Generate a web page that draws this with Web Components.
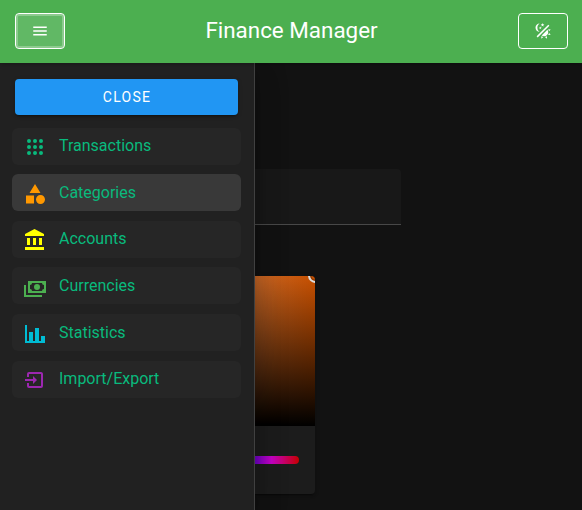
<!DOCTYPE html>
<html lang="en">
<head>
<meta charset="utf-8">
<title>Finance Manager</title>
<style>
html,body{margin:0;height:100%;overflow:hidden;background:#121212;font-family:Roboto,"Liberation Sans",sans-serif;color:#fff}
</style>
</head>
<body>
<finance-app></finance-app>
<script>
const ICONS={
menu:'M3,6H21V8H3V6M3,11H21V13H3V11M3,16H21V18H3V16Z',
theme:'M7.5,2C5.71,3.15 4.5,5.18 4.5,7.5C4.5,9.82 5.71,11.85 7.53,13C4.46,13 2,10.54 2,7.5A5.5,5.5 0 0,1 7.5,2M19.07,3.5L20.5,4.93L4.93,20.5L3.5,19.07L19.07,3.5M12.89,5.93L11.41,5L9.97,6L10.39,4.3L9,3.24L10.75,3.12L11.33,1.47L12,3.1L13.73,3.13L12.38,4.26L12.89,5.93M9.59,9.54L8.43,8.81L7.31,9.59L7.65,8.27L6.56,7.44L7.92,7.35L8.37,6.06L8.88,7.33L10.24,7.36L9.19,8.23L9.59,9.54M19,13.5A5.5,5.5 0 0,1 13.5,19C12.28,19 11.15,18.6 10.24,17.93L17.93,10.24C18.6,11.15 19,12.28 19,13.5M14.6,20.08L17.37,18.93L17.13,22.28L14.6,20.08M18.93,17.38L20.08,14.61L22.28,17.15L18.93,17.38M20.08,12.42L18.94,9.64L22.28,9.88L20.08,12.42M9.63,18.93L12.4,20.08L9.87,22.27L9.63,18.93Z',
grid:[6,12,18].flatMap(y=>[6,12,18].map(x=>`M${x-2},${y}a2,2 0 1,0 4,0a2,2 0 1,0 -4,0`)).join(''),
shape:'M11,13.5V21.5H3V13.5H11M12,2L17.5,11H6.5L12,2M17.5,13C20,13 22,15 22,17.5C22,20 20,22 17.5,22C15,22 13,20 13,17.5C13,15 15,13 17.5,13Z',
bank:'M11.5,1L2,6V8H21V6M16,10V17H19V10M2,22H21V19H2M10,10V17H13V10M4,10V17H7V10H4Z',
cash:'M5,6H23V18H5V6M14,9A3,3 0 0,1 17,12A3,3 0 0,1 14,15A3,3 0 0,1 11,12A3,3 0 0,1 14,9M9,8A2,2 0 0,1 7,10V14A2,2 0 0,1 9,16H19A2,2 0 0,1 21,14V10A2,2 0 0,1 19,8H9M1,10H3V20H19V22H1V10Z',
chart:'M22,21H2V3H4V19H6V10H10V19H12V6H16V19H18V14H22V21Z',
import:'M14,12L10,8V11H2V13H10V16M20,18V6C20,4.89 19.1,4 18,4H6A2,2 0 0,0 4,6V9H6V6H18V18H6V15H4V18A2,2 0 0,0 6,20H18A2,2 0 0,0 20,18Z'
};
function define(name,html){
  customElements.define(name,class extends HTMLElement{
    constructor(){
      super();
      this.attachShadow({mode:'open'}).innerHTML=typeof html==='function'?html(this):html;
    }
  });
}
define('mdi-icon',el=>`<style>:host{display:block;width:var(--size,24px);height:var(--size,24px);flex:none}svg{display:block;width:100%;height:100%}</style>
<svg viewBox="0 0 24 24" fill="currentColor"><path d="${ICONS[el.getAttribute('name')]}"/></svg>`);

define('bar-button',`<style>
:host{box-sizing:border-box;display:flex;align-items:center;justify-content:center;width:50px;height:36px;border:1px solid #fff;border-radius:4px;--size:18px}
:host([focused]){background:rgba(255,255,255,.12);box-shadow:inset 0 0 0 2px rgba(255,255,255,.28)}
</style><slot></slot>`);

define('app-bar',`<style>
:host{display:flex;align-items:center;justify-content:space-between;box-sizing:border-box;height:63px;padding:0 14px 1px 15px;background:#4caf50;position:relative;z-index:3;box-shadow:0 1px 5px rgba(0,0,0,.3)}
h1{margin:0;padding-bottom:2px;font-size:22.4px;line-height:32px;font-weight:400;letter-spacing:0}
</style><bar-button focused><mdi-icon name="menu"></mdi-icon></bar-button><h1><slot></slot></h1><bar-button><mdi-icon name="theme"></mdi-icon></bar-button>`);

define('nav-item',`<style>
:host{display:flex;box-sizing:border-box;height:37px;padding:.62px 11px 0;border-radius:6px;background:#262626;color:#09ba7d}
:host([active]){background:#393939}
.icon{display:block;padding-top:7px;color:var(--tint)}
.label{margin-left:12px;font-size:16px;line-height:35px}
</style><span class="icon"><slot name="icon"></slot></span><span class="label"><slot></slot></span>`);

define('close-button',`<style>
:host{display:block;margin:0 3px 12.6px;height:36px;border-radius:4px;background:#2196f3;box-shadow:0 3px 1px -2px rgba(0,0,0,.2),0 2px 2px rgba(0,0,0,.14),0 1px 5px rgba(0,0,0,.12);font-size:14px;line-height:36px;letter-spacing:1.25px;text-indent:1px;text-align:center}
</style><slot></slot>`);

define('nav-drawer',`<style>
:host{position:absolute;z-index:2;left:0;top:0;bottom:0;box-sizing:border-box;width:255px;padding:16px 13px 0 12px;background:#212121;border-right:1px solid #404040;box-shadow:0 8px 10px -5px rgba(0,0,0,.2),0 16px 24px 2px rgba(0,0,0,.14),0 6px 30px 5px rgba(0,0,0,.12)}
nav{display:grid;gap:9.6px}
</style><slot name="action"></slot><nav><slot></slot></nav>`);

define('text-input',`<style>
:host{display:block;box-sizing:border-box;width:385px;height:56px;background:#181818;border-bottom:1px solid #484848;border-radius:4px 4px 0 0}
</style>`);

define('color-picker',`<style>
:host{display:block;width:300px;height:218px;border-radius:4px;background:#1c1c1c;overflow:hidden;box-shadow:0 3px 1px -2px rgba(0,0,0,.2),0 2px 2px rgba(0,0,0,.14),0 1px 5px rgba(0,0,0,.12)}
.canvas{position:relative;height:150px;overflow:hidden;background:linear-gradient(to top,#000,transparent),linear-gradient(to right,#c4c4c4,#c85000)}
.dot{position:absolute;right:-8px;top:-8px;box-sizing:border-box;width:15px;height:15px;border:2px solid #ddd;border-radius:50%;box-shadow:inset 0 0 0 1.5px rgba(0,0,0,.3)}
.hue{margin:30px 16px 0 72px;height:8px;border-radius:4px;background:linear-gradient(to right,#c60000,#c6c600,#00c600,#00c6c6,#0000c6,#c600c6 87%,#c60000)}
</style><div class="canvas"><div class="dot"></div></div><div class="hue"></div>`);

define('category-form',`<style>
:host{display:block;padding:106px 0 0 16px}
color-picker{margin:51px 0 0 -1px}
</style><text-input></text-input><color-picker></color-picker>`);

define('finance-app',`<style>
:host{display:flex;flex-direction:column;height:100vh;background:#121212}
main{position:relative;flex:1}
</style>
<app-bar>Finance Manager</app-bar>
<main>
<category-form></category-form>
<nav-drawer>
<close-button slot="action">CLOSE</close-button>
<nav-item style="--tint:#09ba7d"><mdi-icon slot="icon" name="grid"></mdi-icon>Transactions</nav-item>
<nav-item active style="--tint:#ff9800"><mdi-icon slot="icon" name="shape"></mdi-icon>Categories</nav-item>
<nav-item style="--tint:#ffff00"><mdi-icon slot="icon" name="bank"></mdi-icon>Accounts</nav-item>
<nav-item style="--tint:#4caf50"><mdi-icon slot="icon" name="cash"></mdi-icon>Currencies</nav-item>
<nav-item style="--tint:#00bcd4"><mdi-icon slot="icon" name="chart"></mdi-icon>Statistics</nav-item>
<nav-item style="--tint:#9c27b0"><mdi-icon slot="icon" name="import"></mdi-icon>Import/Export</nav-item>
</nav-drawer>
</main>`);
</script>
</body>
</html>
